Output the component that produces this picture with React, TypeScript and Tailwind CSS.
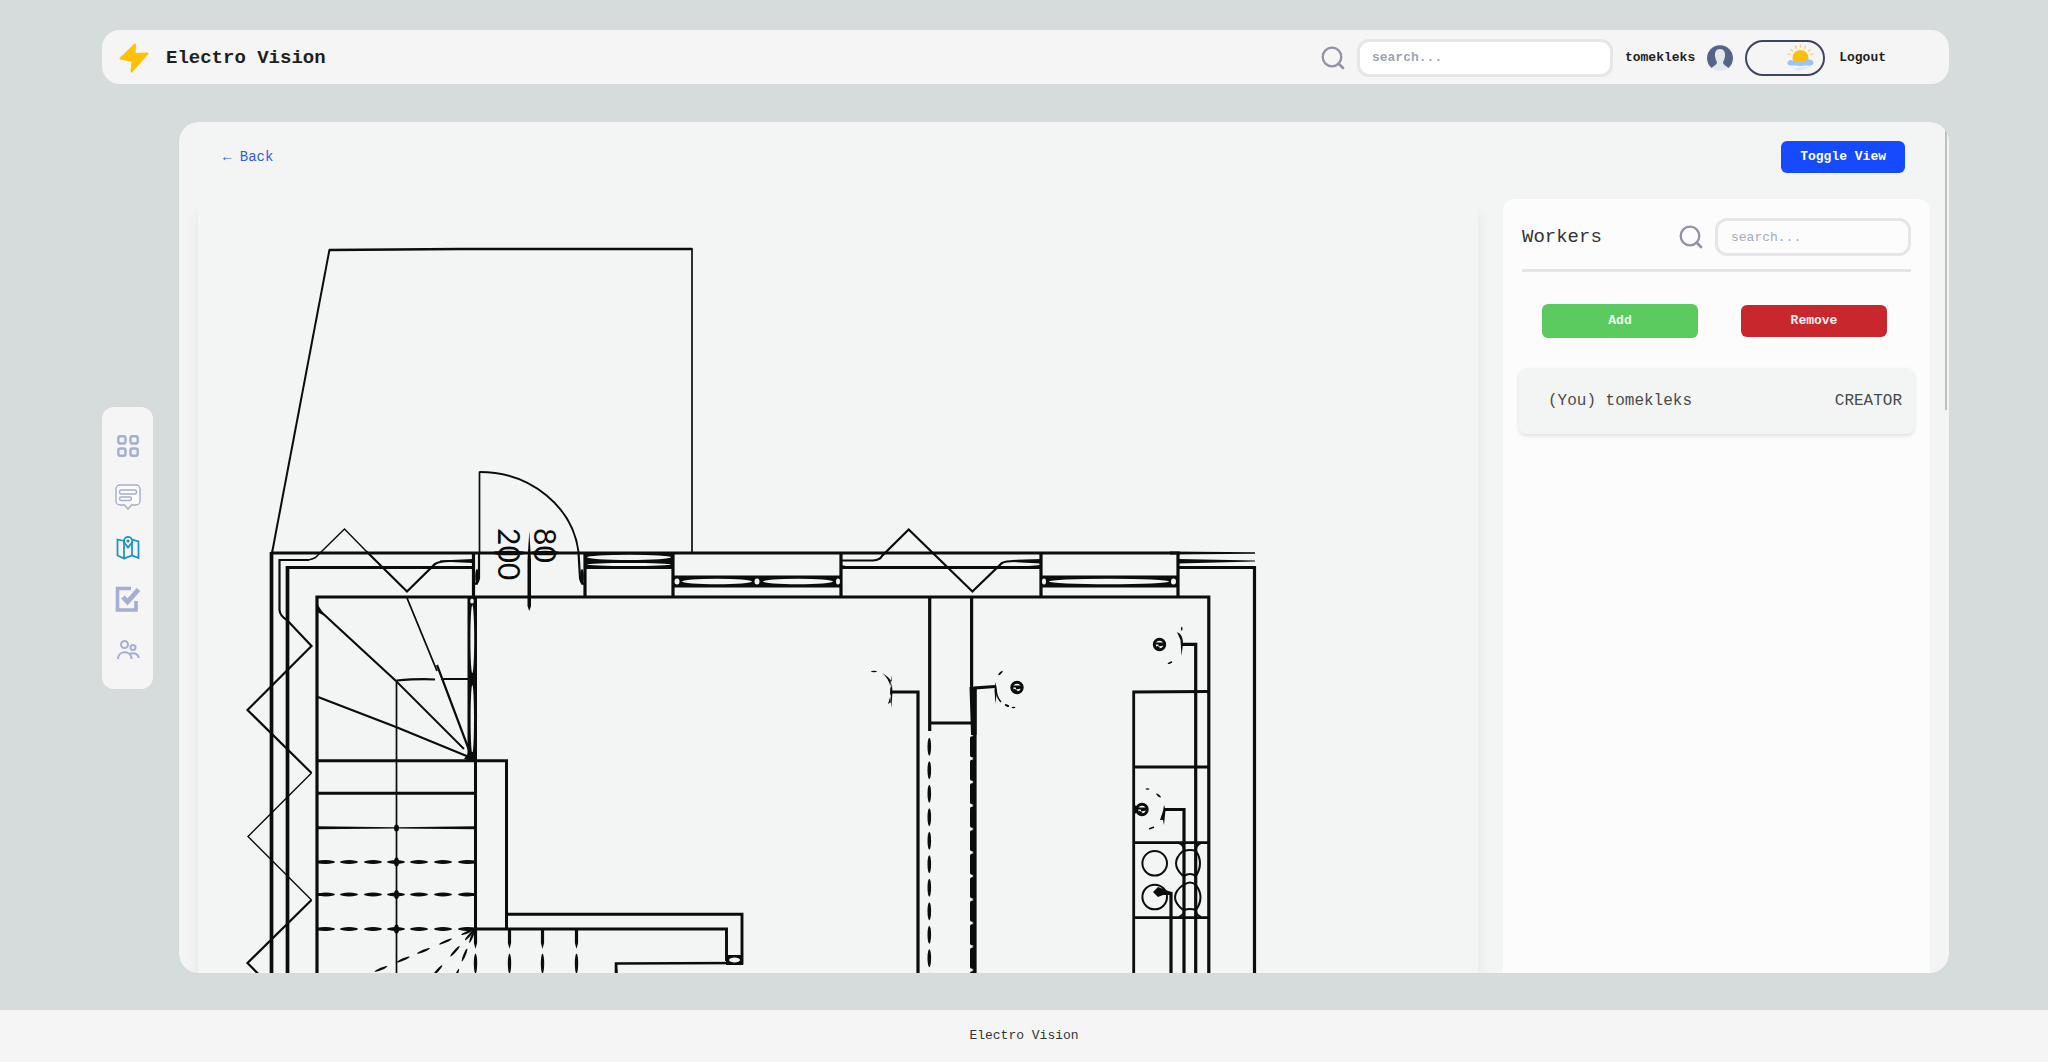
import React from "react";

const INK = "#0b0d0c";
const PAPER = "#f3f5f4";

function Dash({ x, y, rx, ry, a = 0 }: { x: number; y: number; rx: number; ry: number; a?: number }) {
  return <ellipse cx={x} cy={y} rx={rx} ry={ry} fill={INK} transform={`rotate(${a} ${x} ${y})`} />;
}

function Hole({ x, y, rx, ry }: { x: number; y: number; rx: number; ry: number }) {
  return <ellipse cx={x} cy={y} rx={rx} ry={ry} fill={PAPER} />;
}

function Ball({ x, y }: { x: number; y: number }) {
  return (
    <g>
      <circle cx={x} cy={y} r={5.200} fill="none" stroke={INK} strokeWidth={3} />
      <path d={`M${x - 4} ${y - 1}h8M${x - 1} ${y + 1}l5 -1M${x - 3} ${y + 2}l3 2`} stroke={INK} strokeWidth={2} />
    </g>
  );
}

const stairDashX = [326, 349, 373, 396, 419, 443, 467];
const rays: { angle: number; steps: number[] }[] = [
  { angle: 157, steps: [8, 32, 56, 78, 102, 125] },
  { angle: 132, steps: [8, 30, 56] },
  { angle: 112, steps: [8, 28, 50] },
];

function FloorPlan() {
  return (
    <svg viewBox="198 199 1280 1000" className="block w-full" role="img" aria-label="Floor plan">
      <g fill="none" stroke={INK} strokeWidth={3.200}>
        {/* terrace */}
        <path d="M272 553L329.500 249.500" strokeWidth={2} />
        <path d="M329 250L460 249H692" strokeWidth={2.700} />
        <path d="M692 248V552" strokeWidth={1.700} />
        {/* outer walls */}
        <path d="M271 553H1180" />
        <path d="M1170 551.400L1255 552.300V553.700L1170 554.600Z" fill={INK} stroke="none" />
        <path d="M271.500 552V1198M287.500 566V1198" strokeWidth={3.700} />
        <path d="M286 567.500H473M585 567.500H673M841 567.500H1041M1178 567.500H1254.500V1198" />
        <path d="M317 1198V597H1208.800V1198" />
        <path d="M473.500 553V597M585 553V597M673 553V597M841 553V597M1041 553V597M1178 553V597" />
        {/* insulation zigzags */}
        <path d="M308 560Q315 559 318 555L344.500 529L366 551" strokeWidth={1.400} />
        <path d="M366 551L407 591.500L435 564Q440 561 450 561H473" strokeWidth={2.200} />
        <path d="M309 560H279.500V610Q280 616 287 620L311.500 646L247.500 710L311.500 773" strokeWidth={2.200} />
        <path d="M311.500 773L248 836.500L311.500 900" strokeWidth={1.400} />
        <path d="M311.500 900L247.500 963L284 1000" strokeWidth={2.200} />
        <path d="M841 560.500H873Q880 560 882 556L908.700 529.500L972.400 591.500L1002 563Q1006 561 1014 561H1041" strokeWidth={2.200} />
        {/* door */}
        <path d="M479.500 553V471.500" strokeWidth={1.700} />
        <path d="M479.500 472C532 472 573 508 578.500 552" strokeWidth={2} />
        <path d="M578.500 552L580 578Q581 584 585 584M479 553V578Q478 584 474 584" strokeWidth={2.200} />
        <path d="M529.300 531L531 560V606L529.300 611L527.500 606V560Z" fill={INK} stroke="none" />
        {/* central shaft */}
        <path d="M929.700 597V731M971.600 597V690M930 723H972" />
        <path d="M891 692H918V1198M975 1198V688L995 686.500" />
        <path d="M969.500 687H976.500V735H971Z" fill={INK} stroke="none" />
        {/* kitchen counter */}
        <path d="M1133.700 1198V692L1208 691.500M1134 767H1208M1134 842.700H1208M1134 917.700H1208" strokeWidth={2.800} />
        <path d="M1182 644.300H1195.700V1198M1164 809.500H1184V1198M1158 892L1171 893.500V1198" />
        {/* stairs */}
        <path d="M317 760.700H506.500V929M475.500 760V929M317 793.300H475.500" strokeWidth={3} />
        <path d="M317 826.200L396 827.200L475 826.200V829.300L396 828.400L317 829.300Z" fill={INK} stroke="none" />
        <path d="M396.500 681V1198" strokeWidth={1.700} />
        <path d="M318 609L396 681M318 697L396 727L469 757M437 665L469 750" strokeWidth={2.200} />
        <path d="M396 681L464 749M407 598L437 671" strokeWidth={1.800} />
        <path d="M396.500 680.500Q420 678.500 435 679.500M441 679L475 679" strokeWidth={2.200} />
        <path d="M475.500 929H726.500V961M506.500 914.300H742V964.500" strokeWidth={2.900} />
        <path d="M616 973V963.500L742 963M616 963L618 1000" strokeWidth={2.600} />
      </g>

      {/* newel between wall and stairs */}
      <rect x={467.500} y={597} width={9.500} height={165} fill={INK} />
      <Hole x={472} y={601} rx={1.800} ry={2.500} />
      <Hole x={472.300} y={639} rx={1.900} ry={34} />
      <Hole x={472.300} y={719} rx={1.700} ry={34} />
      <path d="M464 759L469 752H477V762Z" fill={INK} />
      <path d="M318 605L325 616L317 612Z" fill={INK} />

      {/* door jambs */}
      <Dash x={477} y={577} rx={1.800} ry={8} />
      <Dash x={582} y={577} rx={1.800} ry={8} />

      {/* wall bands */}
      <rect x={585} y={553} width={88} height={15} fill={INK} />
      <Hole x={629} y={557.300} rx={42} ry={2.600} />
      <Hole x={629} y={564.500} rx={42} ry={1.500} />
      <path d="M841 568V565Q850 567 868 567ZM1012 560L1041 559V563.500L1012 562ZM1041 568V565L1016 567ZM1178 559L1255 560.400V561.400L1178 563.500ZM1178 568V566L1210 567Z" fill={INK} />
      <path d="M440 560.500L473 559V563L440 561.500Z" fill={INK} />

      {/* windows */}
      <rect x={673} y={575.500} width={168} height={12} fill={INK} />
      <Hole x={677} y={581.500} rx={2.500} ry={3} />
      <Hole x={717} y={581.500} rx={35} ry={2.800} />
      <Hole x={757} y={581.500} rx={2.500} ry={3} />
      <Hole x={798} y={581.500} rx={35} ry={2.800} />
      <Hole x={838} y={581.500} rx={2} ry={3} />
      <rect x={1041} y={575.500} width={137} height={12} fill={INK} />
      <Hole x={1044} y={581.500} rx={2} ry={3} />
      <Hole x={1109} y={581.500} rx={60} ry={2.800} />
      <Hole x={1173.500} y={581.500} rx={2.500} ry={3} />

      {/* dimension marks */}
      <Dash x={509} y={553} rx={17} ry={2.300} />
      <Dash x={545} y={553} rx={15} ry={2.300} />
      <g fill={INK} fontFamily="Lato, 'Liberation Sans', sans-serif" fontSize={30} fontWeight={400}>
        <text transform="translate(498 528) rotate(90)">200</text>
        <text transform="translate(534 528) rotate(90)">80</text>
      </g>

      {/* dashed treads */}
      {[862, 894.5, 929].map((y) => (
        <g key={y}>
          {stairDashX.map((x) => (
            <Dash key={x} x={x} y={y} rx={9} ry={1.900} />
          ))}
          <Dash x={396.500} y={y} rx={2.500} ry={4.500} />
          <rect x={317} y={y - 1.500} width={10} height={3} fill={INK} />
          <rect x={466} y={y - 1.500} width={10} height={3} fill={INK} />
        </g>
      ))}
      <Dash x={396.500} y={828} rx={2.500} ry={3.500} />
      {[475.5, 509.5, 542.5, 576.5].map((x) => (
        <g key={x}>
          <path d={`M${x - 1.6} 929H${x + 1.6}L${x + 1.6} 943L${x} 949L${x - 1.6} 943Z`} fill={INK} />
          <Dash x={x} y={963.500} rx={1.700} ry={10} />
        </g>
      ))}
      {rays.map((r) =>
        r.steps.map((s) => {
          const t = (r.angle * Math.PI) / 180;
          return <Dash key={`${r.angle}-${s}`} x={475 + s * Math.cos(t)} y={929 + s * Math.sin(t)} rx={7} ry={1.200} a={r.angle} />;
        }),
      )}
      <rect x={726} y={955} width={17} height={10} fill={INK} />
      <Hole x={734.500} y={960} rx={5.500} ry={2.500} />

      {/* shaft dashes */}
      {Array.from({ length: 18 }, (_, i) => 746.7 + i * 23.5).map((y) => (
        <g key={y}>
          <Dash x={929.300} y={y} rx={1.800} ry={9} />
          <rect x={970} y={y - 10.500} width={5} height={21} rx={1.800} fill={INK} />
        </g>
      ))}
      <path d="M973.200 735V1198" stroke={INK} strokeWidth={1} />

      {/* lamps */}
      <path d="M891.300 675L892.500 692L891.300 708L890 692ZM882 673Q888 677 891 688L892 682Q888 676 882 673ZM891 694L888 704L891 702Z" fill={INK} />
      <Dash x={874} y={671.500} rx={3} ry={0.800} />
      <path d="M995.500 682L997 690L995.500 704L994.500 690Z" fill={INK} />
      <path d="M996 690Q997 698 1001 702" fill="none" stroke={INK} strokeWidth={1.500} />
      <Dash x={1000.500} y={673} rx={3} ry={0.900} a={-45} />
      <Dash x={1007} y={705.500} rx={2.500} ry={1} a={25} />
      <Dash x={1013.500} y={707.500} rx={2} ry={0.800} />
      <Ball x={1017} y={687.500} />
      <path d="M1177 632Q1183 634 1183 644L1181.500 656L1180.500 640Z" fill={INK} />
      <Dash x={1181.700} y={628.700} rx={0.800} ry={2} />
      <Dash x={1170} y={662.700} rx={2.500} ry={0.900} a={-25} />
      <Ball x={1159.500} y={644.500} />
      <path d="M1164 805L1165.500 810L1164 825L1163 820L1160 820L1163 811Z" fill={INK} />
      <Dash x={1147.500} y={789} rx={2} ry={0.800} />
      <Dash x={1158.500} y={795.500} rx={3} ry={0.900} a={40} />
      <Dash x={1151.500} y={828} rx={3} ry={0.900} a={-20} />
      <Ball x={1142} y={809.500} />
      <Dash x={1135.500} y={809.500} rx={2} ry={4} />

      {/* hob */}
      <g fill="none" stroke={INK} strokeWidth={2}>
        <circle cx={1154.700} cy={863.300} r={12.300} />
        <circle cx={1154.700} cy={897} r={12.300} />
        <path d="M1183 851Q1169 863 1183 876M1196 851Q1204 863 1196 876M1183 885Q1167 897 1183 910M1196 885Q1205 897 1196 910" />
        <path d="M1184 876Q1190 872 1196 876M1184 885Q1190 880 1196 885M1184 851Q1190 849 1196 851M1184 910Q1190 908 1196 910M1179 843Q1184 845 1184 850M1201 843Q1196 845 1196 850M1179 917Q1184 915 1184 910M1201 917Q1196 915 1196 910" />
      </g>
      <path d="M1153 892L1158 887L1171 892V895H1163L1158 897Z" fill={INK} />
    </svg>
  );
}

function SearchIcon() {
  return (
    <svg width="24" height="24" viewBox="0 0 24 24" fill="none" stroke="#9292a6" strokeWidth="2.300" strokeLinecap="round" aria-hidden="true" className="shrink-0">
      <circle cx="11" cy="11" r="9.300" />
      <path d="M17.500 17.500L22 22" strokeWidth="2.700" />
    </svg>
  );
}

function BoltIcon() {
  return (
    <svg width="30" height="30" viewBox="0 0 30 30" fill="#ffc107" stroke="#ffc107" strokeWidth="2" strokeLinejoin="round" aria-hidden="true">
      <path d="M16 1.500L1.500 15.500L13.500 18L12.500 28.500L28.500 10.500L15.500 11Z" />
    </svg>
  );
}

function AvatarIcon() {
  return (
    <svg width="26" height="26" viewBox="0 0 26 26" aria-hidden="true">
      <path d="M4.500 23A13 13 0 1 1 21.500 23Z" fill="#566388" />
      <path d="M13 4C9 4 7.500 7.500 8 11.500C8.500 14.500 9.500 16 10 17C10 20 7 20.500 4.500 23Q8 26 13 26T21.500 23C19 20.500 16 20 16 17C16.500 16 17.500 14.500 18 11.500C18.500 7.500 17 4 13 4Z" fill="#e3e9ea" />
    </svg>
  );
}

function SunIcon() {
  return (
    <svg width="28" height="28" viewBox="0 0 28 28" aria-hidden="true">
      <g stroke="#fcd07a" strokeWidth="1.500" strokeLinecap="round">
        <path d="M13.500 1v2M18.500 2l-.7 2M8.500 2l.7 2M23 5.500l-1.500 1.500M4 5.500l1.500 1.500M26 10l-2 .6M1 10l2 .6" />
      </g>
      <circle cx="13.500" cy="14" r="8" fill="#fdbf0f" />
      <path d="M2.500 21.500a2.700 2.700 0 0 1 0-5.200C5 15 6 17.500 9 17.500S15 18.500 18 17C21 14.500 26.500 15.500 26.500 18.500S23 22 20 21.500Z" fill="#9cc4fb" />
      <path d="M7 25.500Q10 23 14 23T23 22Q21 25 17 25.500T12 27Z" fill="#dbeafc" />
    </svg>
  );
}

const navItems = [
  {
    label: "Dashboard",
    color: "text-[#a5add0]",
    icon: (
      <g strokeWidth="2.400">
        <rect x="3.300" y="3.300" width="7.200" height="7.200" rx="2" />
        <rect x="15.500" y="3.300" width="7.200" height="7.200" rx="2" />
        <rect x="3.300" y="15.500" width="7.200" height="7.200" rx="2" />
        <rect x="15.500" y="15.500" width="7.200" height="7.200" rx="2" />
      </g>
    ),
  },
  {
    label: "Messages",
    color: "text-[#a5add0]",
    icon: (
      <g strokeWidth="1.400">
        <path d="M5 1H21a4 4 0 0 1 4 4V17a4 4 0 0 1-4 4H16.500L13 25L9.500 21H5a4 4 0 0 1-4-4V5a4 4 0 0 1 4-4Z" fill="#fcfcfd" />
        <rect x="4.500" y="6" width="17" height="4" rx="2" />
        <rect x="4.500" y="13" width="12" height="3.500" rx="1.700" />
      </g>
    ),
  },
  {
    label: "Plans",
    color: "text-[#1490c8]",
    icon: (
      <g strokeWidth="1.700">
        <path d="M9.500 6L2.500 4.500V20.500L9 23.500L17 20.500L23.500 23V6.500L17 4.500M9 7V23.500M17 7V20.500" />
        <path d="M13 12.500L9.800 8.200a4 4 0 1 1 6.600 0Z" />
        <circle cx="13" cy="6" r=".7" fill="currentColor" />
      </g>
    ),
  },
  {
    label: "Tasks",
    color: "text-[#a5add0]",
    icon: (
      <g>
        <path d="M16 2.500H2.500V24H21V15" strokeWidth="3.600" />
        <path d="M8 11L12.500 16L23.500 3.500" strokeWidth="4.800" />
      </g>
    ),
  },
  {
    label: "Team",
    color: "text-[#a5add0]",
    icon: (
      <g strokeWidth="2">
        <circle cx="9.500" cy="7.500" r="3.500" />
        <circle cx="18" cy="10.500" r="2.500" />
        <path d="M3 22C3 13 16.500 13 16.500 22M14.500 17C19 15 23.500 17 23.500 21" />
      </g>
    ),
  },
];

export default function App() {
  return (
    <div className="flex h-screen flex-col bg-[#d6dcdb] font-['Liberation_Mono','Courier_New',monospace] text-[13px] leading-5 text-[#1f1f1f]">
      <header className="mt-[30px] mr-[99px] ml-[102px] flex h-[54px] shrink-0 items-center rounded-[18px] bg-[#f5f5f5] pt-px pr-[63px] pl-[17px] font-bold">
        <BoltIcon />
        <h1 className="ml-[17px] text-[19px] leading-7">Electro Vision</h1>
        <div className="ml-auto flex items-center">
          <label htmlFor="site-search" aria-label="Search">
            <SearchIcon />
          </label>
          <input
            id="site-search"
            type="search"
            placeholder="search..."
            className="ml-3 h-[38px] w-64 rounded-xl border-[3px] border-[#e4e6ea] bg-white px-3 outline-none placeholder:text-[#9da5b1]"
          />
          <span className="ml-3">tomekleks</span>
          <span className="ml-3">
            <AvatarIcon />
          </span>
          <button type="button" aria-label="Toggle theme" className="ml-3 flex h-9 w-20 items-center justify-end rounded-full border-2 border-[#3d4560] pr-2">
            <SunIcon />
          </button>
          <button type="button" className="ml-3.5 font-bold">
            Logout
          </button>
        </div>
      </header>

      <div className="mt-[38px] mr-[99px] ml-[102px] flex min-h-0 flex-1 items-center gap-[26px]">
        <nav className="flex w-[51px] shrink-0 flex-col items-center gap-[25px] rounded-xl bg-[#f5f5f5] py-[26px]">
          {navItems.map((item) => (
            <a key={item.label} href="#" aria-label={item.label} className={item.color}>
              <svg width="26" height="26" viewBox="0 0 26 26" fill="none" stroke="currentColor" aria-hidden="true" className="block">
                {item.icon}
              </svg>
            </a>
          ))}
        </nav>

        <main className="relative h-full min-w-0 flex-1 overflow-hidden rounded-[20px] bg-[#f3f5f4]">
          <div className="flex h-[77px] items-start justify-between px-11">
            <a href="#" className="mt-[25px] text-[14px] text-[#3559e0]">
              ← Back
            </a>
            <button type="button" className="mt-[19px] h-8 rounded-md bg-[#154aff] px-[19px] font-bold text-white">
              Toggle View
            </button>
          </div>
          <div className="flex items-stretch gap-[25px] px-[19px]">
            <section className="min-w-0 flex-1 shadow-[0_10px_15px_-3px_rgba(0,0,0,0.1)]">
              <FloorPlan />
            </section>
            <aside className="w-[427px] shrink-0 rounded-xl bg-[#fcfcfc] px-4 pt-[19px]">
              <div className="flex items-center px-[3px]">
                <h2 className="text-[19px] leading-7 text-[#333]">Workers</h2>
                <label htmlFor="worker-search" aria-label="Search workers" className="ml-auto">
                  <SearchIcon />
                </label>
                <input
                  id="worker-search"
                  type="search"
                  placeholder="search..."
                  className="ml-3 h-[38px] w-[196px] rounded-xl border-[3px] border-[#e5e5ea] bg-transparent px-[13px] outline-none placeholder:text-[#a5abb5]"
                />
              </div>
              <hr className="mx-[3px] mt-[13px] border-t-[3px] border-[#e4e5ea]" />
              <div className="mt-8 flex items-center justify-between pr-[27px] pl-[23px]">
                <button type="button" className="h-[34px] w-[156px] rounded-md bg-[#5ccb5f] pb-px font-bold text-[#eefbee]">
                  Add
                </button>
                <button type="button" className="h-8 w-[146px] rounded-md bg-[#c8272d] pb-px font-bold text-[#fdeeee]">
                  Remove
                </button>
              </div>
              <div className="mt-[30px] flex h-[66px] items-center justify-between rounded-lg bg-[#f3f5f4] pr-3 pl-[29px] text-[16px] text-[#4a4a4a] shadow-[0_2px_4px_rgba(0,0,0,0.12)]">
                <span>(You) tomekleks</span>
                <span>CREATOR</span>
              </div>
            </aside>
          </div>
          <div className="absolute top-1.5 right-0.5 h-[282px] w-0.5 bg-[#bdbfc0]" />
        </main>
      </div>

      <footer className="mt-[37px] flex h-[52px] shrink-0 items-center justify-center bg-[#f5f5f5] text-[#333]">Electro Vision</footer>
    </div>
  );
}
